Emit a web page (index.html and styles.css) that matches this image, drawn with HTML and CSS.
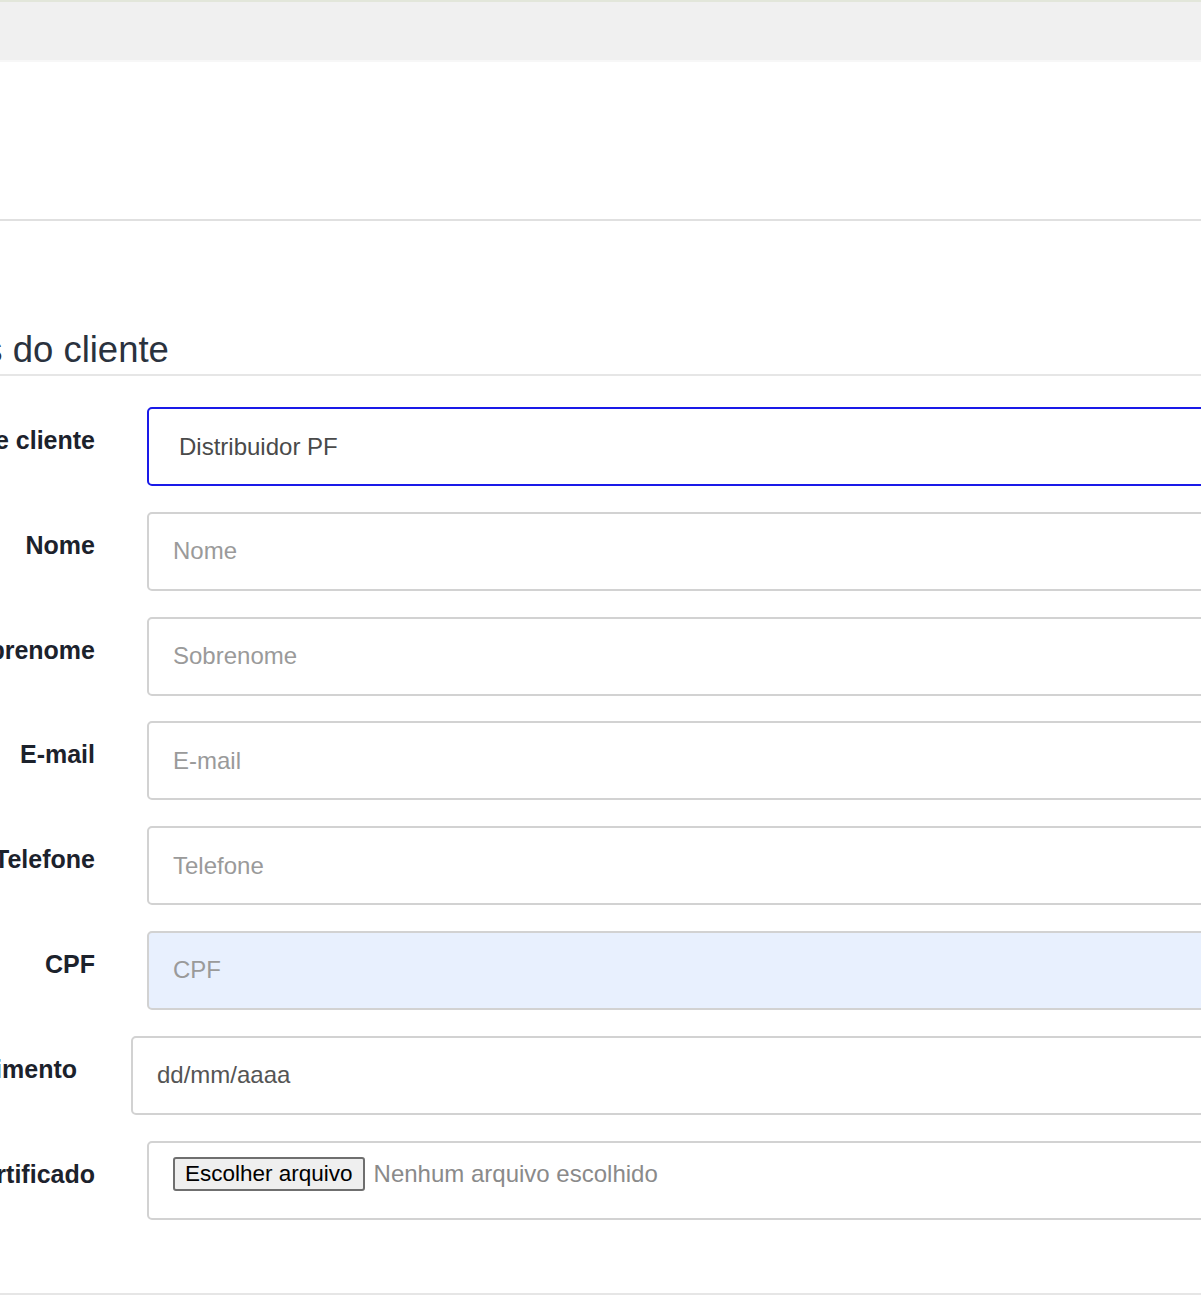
FILE: index.html
```html
<!DOCTYPE html>
<html lang="pt-BR">
<head>
<meta charset="utf-8">
<title>Dados do cliente</title>
<link rel="stylesheet" href="styles.css">
</head>
<body>
<header class="topbar"></header>
<div class="spacer"></div>
<main class="page">
  <h2 class="section-title">Dados do cliente</h2>
  <form class="form">
    <div class="row">
      <label class="label" for="tipo">Tipo de cliente</label>
      <select class="field field--select" id="tipo">
        <option>Distribuidor PF</option>
      </select>
    </div>
    <div class="row">
      <label class="label" for="nome">Nome</label>
      <input class="field" id="nome" type="text" placeholder="Nome">
    </div>
    <div class="row">
      <label class="label" for="sobrenome">Sobrenome</label>
      <input class="field" id="sobrenome" type="text" placeholder="Sobrenome">
    </div>
    <div class="row">
      <label class="label" for="email">E-mail</label>
      <input class="field" id="email" type="text" placeholder="E-mail">
    </div>
    <div class="row">
      <label class="label" for="telefone">Telefone</label>
      <input class="field" id="telefone" type="text" placeholder="Telefone">
    </div>
    <div class="row">
      <label class="label" for="cpf">CPF</label>
      <input class="field field--autofill" id="cpf" type="text" placeholder="CPF">
    </div>
    <div class="row row--date">
      <label class="label" for="nasc">Data de nascimento</label>
      <input class="field field--date" id="nasc" type="text" value="dd/mm/aaaa">
    </div>
    <div class="row">
      <label class="label">Certificado</label>
      <div class="field field--file">
        <span class="file-btn">Escolher arquivo</span>
        <span class="file-name">Nenhum arquivo escolhido</span>
      </div>
    </div>
  </form>
  <div class="bottom-rule"></div>
</main>
</body>
</html>
```

FILE: styles.css
```css
html, body {
  margin: 0;
  padding: 0;
  background: #ffffff;
  overflow: hidden;
}

body {
  font-family: "Liberation Sans", Arial, sans-serif;
  color: #222;
}

.topbar {
  height: 58px;
  background: #f0f0f0;
  border-top: 2px solid #e2e6da;
  border-bottom: 2px solid #f7f7f7;
}

.spacer {
  height: 157px;
  border-bottom: 2px solid #e0e0e0;
}

.page {
  width: 1400px;
  margin-left: -105px;
}

.section-title {
  margin: 109px 0 0 2px;
  padding-bottom: 4px;
  font-size: 36.5px;
  line-height: 40px;
  font-weight: 400;
  color: #2a323e;
  border-bottom: 2px solid #e6e6e6;
}

.form {
  margin-top: 31px;
  display: flex;
  flex-direction: column;
  gap: 25.8px;
}

.row {
  display: grid;
  grid-template-columns: 200px 1fr;
  column-gap: 52px;
  align-items: start;
}

.row--date {
  margin-left: -18px;
  column-gap: 54px;
}

.label {
  display: flex;
  justify-content: flex-end;
  font-size: 25px;
  line-height: 29px;
  font-weight: 700;
  color: #1c222c;
  padding-top: 19px;
  white-space: nowrap;
}

.field {
  box-sizing: border-box;
  height: 79px;
  width: 100%;
  margin: 0;
  padding: 0 24px;
  border: 2px solid #d2d2d2;
  border-radius: 5px;
  background: #fff;
  font-family: "Liberation Sans", Arial, sans-serif;
  font-size: 24px;
  color: #555;
  outline: none;
  -webkit-appearance: none;
  appearance: none;
}

.field::placeholder {
  color: #9a9a9a;
}

.field--select {
  border-color: #1a1ae8;
  padding-left: 30px;
  font-size: 24px;
  color: #4a4a4a;
}

.field--autofill {
  background: #e8f0fe;
}

.field--date {
  color: #555;
}

.field--file {
  display: flex;
  align-items: flex-start;
  padding: 14px 24px 0 24px;
  gap: 9px;
}

.file-btn {
  box-sizing: border-box;
  height: 34px;
  padding: 0 10px;
  border: 2px solid #6f6f6f;
  border-radius: 3px;
  background: #efefef;
  font-size: 22.5px;
  line-height: 30px;
  color: #000;
  white-space: nowrap;
}

.file-name {
  font-size: 24px;
  line-height: 34px;
  color: #8a8a8a;
  white-space: nowrap;
}

.bottom-rule {
  margin-top: 73px;
  border-bottom: 2px solid #e6e6e6;
}
```
